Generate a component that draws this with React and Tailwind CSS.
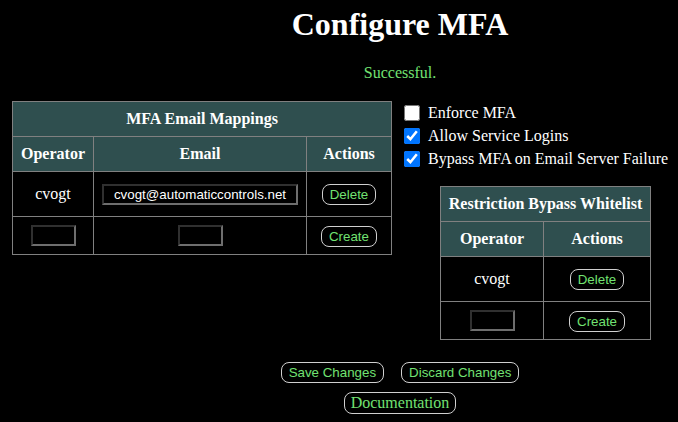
import React from "react";

const green = "text-[#72e272]";

function Btn({ children, big }) {
  return (
    <button
      className={
        (big
          ? "font-[Liberation_Serif,serif] text-[16px] leading-[18px] px-[6px] py-[1px]"
          : "font-[Liberation_Sans,Arial,sans-serif] text-[13.333px] leading-[15px] px-[7px] py-[2px]") +
        " bg-black text-[#72e272] border border-[#d0d0d0] rounded-[8px] whitespace-nowrap"
      }
    >
      {children}
    </button>
  );
}

function Input({ value, w }) {
  return (
    <input
      readOnly
      value={value || ""}
      className={
        "h-[21px] bg-black text-white border-2 border-t-[#303030] border-l-[#303030] border-b-[#6e6e6e] border-r-[#6e6e6e] text-center text-[13.333px] font-[Liberation_Sans,Arial,sans-serif] outline-none " +
        w
      }
    />
  );
}

const cell = "border border-[#808080] text-center align-middle p-0";
const head = cell + " bg-[#2f4f4f] font-bold";

export default function App() {
  return (
    <div className="w-full h-[422px] bg-black text-white text-[16px] overflow-hidden font-[Liberation_Serif,serif]">
      <div className="flex justify-center pl-[122px] pt-[6px]">
        <h1 className="text-[32px] leading-[37px] font-bold">Configure MFA</h1>
      </div>
      <div className="flex justify-center pl-[122px] mt-[21px]">
        <p className={green + " leading-[18px]"}>Successful.</p>
      </div>
      <div className="flex items-start mt-[19px] pl-[12px]">
        <table className="border-collapse table-fixed w-[379px]">
          <colgroup>
            <col className="w-[81px]" />
            <col className="w-[213px]" />
            <col className="w-[85px]" />
          </colgroup>
          <tbody>
            <tr>
              <td colSpan={3} className={head + " h-[35px]"}>MFA Email Mappings</td>
            </tr>
            <tr>
              <td className={head + " h-[35px]"}>Operator</td>
              <td className={head}>Email</td>
              <td className={head}>Actions</td>
            </tr>
            <tr>
              <td className={cell + " h-[45px]"}>cvogt</td>
              <td className={cell}>
                <div className="flex justify-center">
                  <Input value="cvogt@automaticcontrols.net" w="w-[196px]" />
                </div>
              </td>
              <td className={cell}>
                <Btn>Delete</Btn>
              </td>
            </tr>
            <tr>
              <td className={cell + " h-[38px]"}>
                <div className="flex justify-center">
                  <Input w="w-[45px]" />
                </div>
              </td>
              <td className={cell}>
                <div className="flex justify-center">
                  <Input w="w-[45px]" />
                </div>
              </td>
              <td className={cell}>
                <Btn>Create</Btn>
              </td>
            </tr>
          </tbody>
        </table>
        <div className="ml-[12px] flex flex-col">
          {[
            ["Enforce MFA", false],
            ["Allow Service Logins", true],
            ["Bypass MFA on Email Server Failure", true],
          ].map(([label, checked]) => (
            <label key={label} className="flex items-center h-[23px] gap-[8px] whitespace-nowrap">
              <input
                type="checkbox"
                defaultChecked={checked}
                className="m-0 w-4 h-4 accent-[#0075ff]"
              />
              <span>{label}</span>
            </label>
          ))}
          <table className="border-collapse table-fixed w-[210px] ml-[36px] mt-[16px]">
            <colgroup>
              <col className="w-[103px]" />
              <col className="w-[107px]" />
            </colgroup>
            <tbody>
              <tr>
                <td colSpan={2} className={head + " h-[35px] whitespace-nowrap"}>
                  Restriction Bypass Whitelist
                </td>
              </tr>
              <tr>
                <td className={head + " h-[35px]"}>Operator</td>
                <td className={head}>Actions</td>
              </tr>
              <tr>
                <td className={cell + " h-[45px]"}>cvogt</td>
                <td className={cell}>
                  <Btn>Delete</Btn>
                </td>
              </tr>
              <tr>
                <td className={cell + " h-[38px]"}>
                  <div className="flex justify-center">
                    <Input w="w-[45px]" />
                  </div>
                </td>
                <td className={cell}>
                  <Btn>Create</Btn>
                </td>
              </tr>
            </tbody>
          </table>
        </div>
      </div>
      <div className="flex justify-center pl-[122px] mt-[22px] gap-[17px]">
        <Btn>Save Changes</Btn>
        <Btn>Discard Changes</Btn>
      </div>
      <div className="flex justify-center pl-[122px] mt-[9px]">
        <Btn big>Documentation</Btn>
      </div>
    </div>
  );
}
